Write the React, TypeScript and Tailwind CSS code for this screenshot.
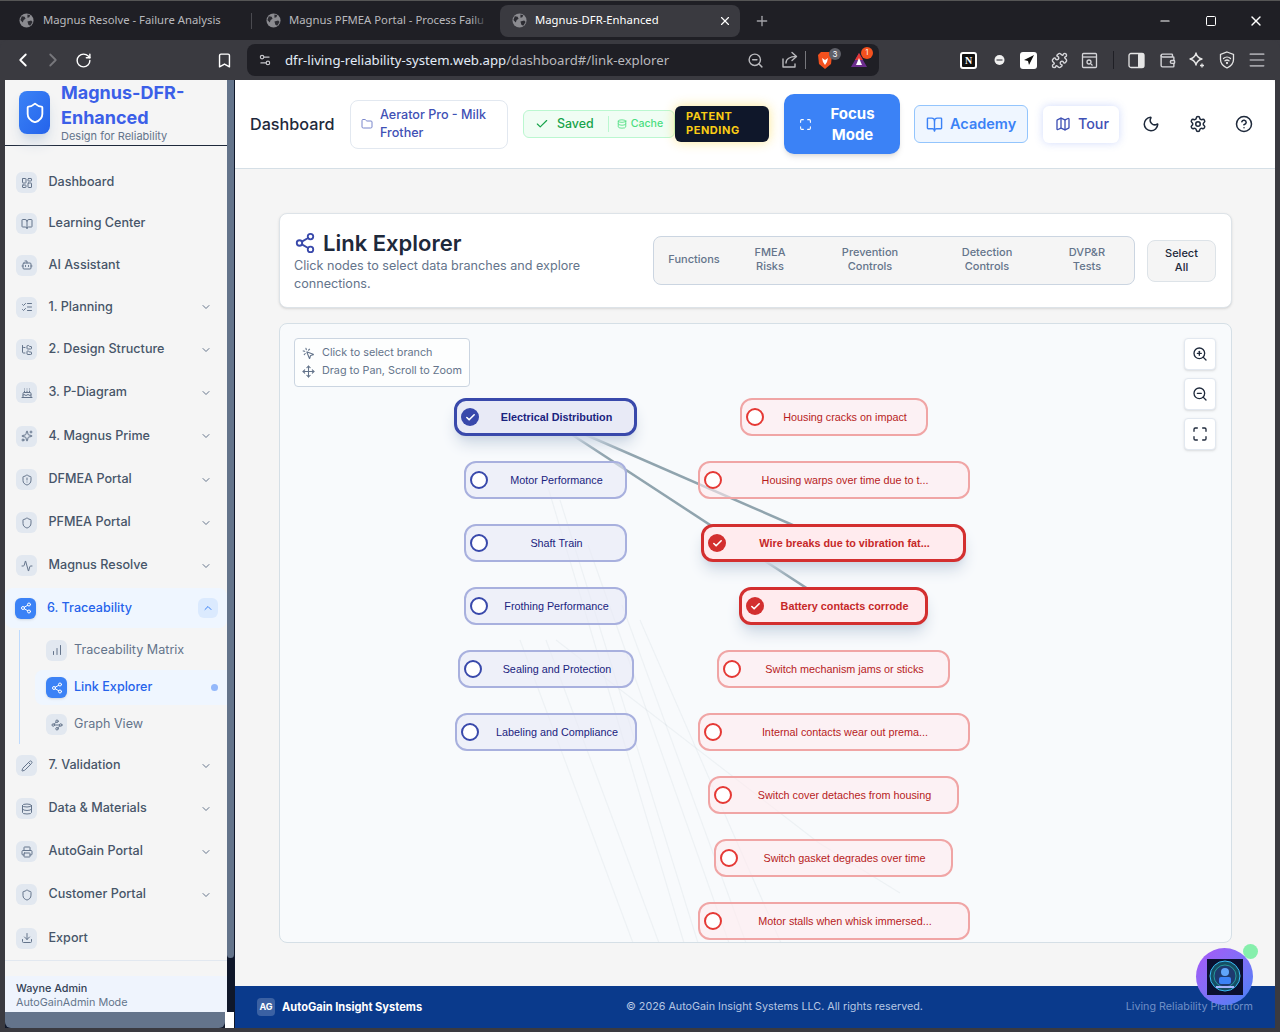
import {
  Activity, Bookmark, BookOpen, Bot, Cake, ChartNoAxesColumnIncreasing, Check, ChevronDown, ChevronLeft,
  ChevronRight, ChevronUp, CircleHelp, Database, Download, Folder, FolderTree, LayoutDashboard, ListChecks,
  Map as MapIcon, Maximize, Menu, Minus, Moon, MousePointerClick, Move, Pencil, Plus, Printer, Puzzle, RotateCw,
  Settings, Settings2, Share2, Shield, ShieldAlert, Sparkles, Square, Wallet, Waypoints, X, ZoomIn, ZoomOut,
} from "lucide-react";

const navTop = [
  { icon: LayoutDashboard, label: "Dashboard", h: "h-[41px]" },
  { icon: BookOpen, label: "Learning Center", h: "h-[41px]" },
  { icon: Bot, label: "AI Assistant", h: "h-[42px]" },
  { icon: ListChecks, label: "1. Planning", h: "h-[42px]", chevron: true },
  { icon: FolderTree, label: "2. Design Structure", h: "h-[43px]", chevron: true },
  { icon: Cake, label: "3. P-Diagram", h: "h-[43px]", chevron: true },
  { icon: Sparkles, label: "4. Magnus Prime", h: "h-[44px]", chevron: true },
  { icon: ShieldAlert, label: "DFMEA Portal", h: "h-[43px]", chevron: true },
  { icon: Shield, label: "PFMEA Portal", h: "h-[43px]", chevron: true },
  { icon: Activity, label: "Magnus Resolve", h: "h-[43px]", chevron: true },
];

const navBottom = [
  { icon: Pencil, label: "7. Validation", h: "h-[43px]", chevron: true },
  { icon: Database, label: "Data & Materials", h: "h-[43px]", chevron: true },
  { icon: Printer, label: "AutoGain Portal", h: "h-[43px]", chevron: true },
  { icon: Shield, label: "Customer Portal", h: "h-[43px]", chevron: true },
  { icon: Download, label: "Export", h: "h-[44px]" },
];

const functionNodes = [
  { label: "Electrical Distribution", pos: "left-[174px] top-[74px] w-[183px]", selected: true },
  { label: "Motor Performance", pos: "left-[184px] top-[137px] w-[163px]" },
  { label: "Shaft Train", pos: "left-[184px] top-[200px] w-[163px]" },
  { label: "Frothing Performance", pos: "left-[184px] top-[263px] w-[163px]" },
  { label: "Sealing and Protection", pos: "left-[178px] top-[326px] w-[176px]" },
  { label: "Labeling and Compliance", pos: "left-[175px] top-[389px] w-[182px]" },
];

const riskNodes = [
  { label: "Housing cracks on impact", pos: "left-[460px] top-[74px] w-[188px]" },
  { label: "Housing warps over time due to t...", pos: "left-[418px] top-[137px] w-[272px]" },
  { label: "Wire breaks due to vibration fat...", pos: "left-[421px] top-[200px] w-[265px]", selected: true },
  { label: "Battery contacts corrode", pos: "left-[459px] top-[263px] w-[189px]", selected: true },
  { label: "Switch mechanism jams or sticks", pos: "left-[437px] top-[326px] w-[233px]" },
  { label: "Internal contacts wear out prema...", pos: "left-[418px] top-[389px] w-[272px]" },
  { label: "Switch cover detaches from housing", pos: "left-[428px] top-[452px] w-[251px]" },
  { label: "Switch gasket degrades over time", pos: "left-[434px] top-[515px] w-[239px]" },
  { label: "Motor stalls when whisk immersed...", pos: "left-[418px] top-[578px] w-[272px]" },
];

// faint links to risks that are scrolled out of view
const faintLines = [
  [520, 640, 633, 943],
  [546, 640, 659, 943],
  [547, 484, 684, 943],
  [560, 500, 698, 943],
  [588, 545, 729, 943],
  [622, 605, 746, 943],
  [640, 620, 781, 943],
  [556, 640, 819, 843],
  [819, 843, 900, 893],
];

function NavRow({ item }: { item: any }) {
  const Icon = item.icon;
  return (
    <div className={`${item.h} flex items-center pl-[11px] pr-[15px]`}>
      <div className="w-[21px] h-[21px] rounded-md bg-[#e2e8f0] flex items-center justify-center text-[#64748b]">
        <Icon size={12} />
      </div>
      <span className="ml-[11.5px] text-[12.6px] font-medium text-[#475569]">{item.label}</span>
      {item.chevron && <ChevronDown size={12} className="ml-auto text-[#64748b]" />}
    </div>
  );
}

function Sidebar() {
  return (
    <div className="w-[230px] flex flex-col shrink-0 bg-[#0f172a]">
      <div className="flex-1 flex min-h-0">
        <div className="w-[222px] bg-[#f5f5f5] flex flex-col overflow-hidden">
          <div className="h-[66px] shrink-0 border-b border-[#1e293b] flex pl-[14px]">
            <div className="mt-[11px] w-[31px] h-[43px] rounded-lg bg-gradient-to-br from-[#3b82f6] to-[#2563eb] flex items-center justify-center shadow-lg shadow-slate-300">
              <Shield size={22} className="text-white" />
            </div>
            <div className="ml-[11px]">
              <div className="text-[18px] leading-[25px] font-bold text-[#3b5fe8]">Magnus-DFR-<br />Enhanced</div>
              <div className="text-[11px] leading-[13px] text-[#64748b]">Design for Reliability</div>
            </div>
          </div>
          <div className="pt-[16px] flex flex-col">
            {navTop.map((item) => (
              <NavRow key={item.label} item={item} />
            ))}
            <div className="h-[40px] mt-[1px] mb-[2px] rounded-lg bg-[#eff6ff] flex items-center pl-[10px] pr-[9px]">
              <div className="w-[21px] h-[21px] rounded-md bg-[#3b82f6] flex items-center justify-center text-white shadow">
                <Share2 size={12} />
              </div>
              <span className="ml-[11px] text-[12.6px] font-medium text-[#2563eb]">6. Traceability</span>
              <div className="ml-auto w-[20px] h-[20px] rounded-md bg-[#dbeafe] flex items-center justify-center text-[#3b82f6]">
                <ChevronUp size={12} />
              </div>
            </div>
            <div className="ml-[14px] border-l border-[#bfdbfe] pl-[15px] h-[114px] flex flex-col">
              <div className="h-[40px] flex items-center pl-[11px]">
                <div className="w-[21px] h-[21px] rounded-md bg-[#e2e8f0] flex items-center justify-center text-[#64748b]">
                  <ChartNoAxesColumnIncreasing size={12} />
                </div>
                <span className="ml-[7px] text-[12.6px] text-[#64748b]">Traceability Matrix</span>
              </div>
              <div className="h-[35px] rounded-l-lg bg-[#eff6ff] flex items-center pl-[11px] pr-[9px]">
                <div className="w-[21px] h-[21px] rounded-md bg-[#3b82f6] flex items-center justify-center text-white shadow">
                  <Share2 size={12} />
                </div>
                <span className="ml-[7px] text-[12.6px] font-medium text-[#2563eb]">Link Explorer</span>
                <span className="ml-auto w-[7px] h-[7px] rounded-full bg-[#93b8fb]" />
              </div>
              <div className="h-[39px] flex items-center pl-[11px]">
                <div className="w-[21px] h-[21px] rounded-md bg-[#e2e8f0] flex items-center justify-center text-[#64748b]">
                  <Waypoints size={12} />
                </div>
                <span className="ml-[7px] text-[12.6px] text-[#64748b]">Graph View</span>
              </div>
            </div>
            {navBottom.map((item) => (
              <NavRow key={item.label} item={item} />
            ))}
          </div>
          <div className="mt-auto border-t border-[#e2e8f0] pt-[15px]">
            <div className="h-[36px] bg-[#eff4fd] pl-[11px] pt-[6px]">
              <div className="text-[10.8px] leading-[14px] font-medium text-[#334155]">Wayne Admin</div>
              <div className="text-[10.8px] leading-[14px] text-[#64748b]">AutoGainAdmin Mode</div>
            </div>
          </div>
        </div>
        <div className="w-[7px] h-[878px] bg-[#64748b] rounded-b" />
      </div>
      <div className="h-[16px] shrink-0 flex">
        <div className="w-[220px] bg-[#64748b] rounded-b-md" />
        <div className="w-[9px] bg-white" />
      </div>
    </div>
  );
}

function Header() {
  return (
    <div className="h-[89px] shrink-0 bg-white border-b border-[#d5dfe6] flex items-center pl-[15px] rounded-tr">
      <span className="pt-[1px] text-[16.2px] font-medium text-[#1e293b] w-[100px]">Dashboard</span>
      <div className="w-[158px] h-[49px] rounded-lg border border-[#e2e8f0] flex items-center pl-[10px]">
        <Folder size={12} className="text-[#7986cb] shrink-0" />
        <span className="ml-[7px] text-[12.6px] leading-[18px] font-medium text-[#3f51b5]">Aerator Pro - Milk<br />Frother</span>
      </div>
      <div className="ml-[15px] w-[152px] h-[28px] rounded-md border border-[#bbf7d0] bg-[#f0fdf4] flex items-center pl-[11px] shrink-0">
        <Check size={14} className="text-[#16a34a]" />
        <span className="ml-[8px] text-[12.4px] font-medium text-[#16a34a]">Saved</span>
        <span className="ml-[14px] w-px h-[16px] bg-[#bbf7d0]" />
        <Database size={10} className="ml-[8px] text-[#4ade80]" />
        <span className="ml-[4px] text-[10.6px] font-medium text-[#4ade80]">Cache</span>
      </div>
      <div className="w-[94px] h-[36px] rounded-md bg-[#0f172a] shadow-[0_0_12px_rgba(250,204,21,0.45)] pl-[11px] pt-[3px] text-[11px] leading-[14px] font-bold tracking-wider text-[#facc15] shrink-0">
        PATENT<br />PENDING
      </div>
      <div className="ml-[15px] w-[116px] h-[60px] rounded-[10px] bg-[#3b82f6] shadow-md flex items-center pl-[15px] text-white shrink-0">
        <Maximize size={13} />
        <span className="flex-1 text-center pr-[7px] text-[15px] leading-[21px] font-bold">Focus<br />Mode</span>
      </div>
      <div className="ml-[14px] w-[114px] h-[38px] rounded-md bg-[#eff6ff] border border-[#93c5fd] flex items-center pl-[11px] text-[#3b82f6] shrink-0">
        <BookOpen size={17} />
        <span className="ml-[7px] text-[14.5px] font-semibold">Academy</span>
      </div>
      <div className="ml-[15px] w-[76px] h-[37px] rounded-md bg-white shadow-[0_0_8px_rgba(99,132,241,0.3)] flex items-center pl-[12px] text-[#3f51b5] shrink-0">
        <MapIcon size={16} />
        <span className="ml-[7px] text-[14.3px] font-medium">Tour</span>
      </div>
      <Moon size={18} className="ml-[23px] text-[#1e293b] shrink-0" />
      <Settings size={18} className="ml-[29px] text-[#1e293b] shrink-0" />
      <CircleHelp size={18} className="ml-[28px] text-[#1e293b] shrink-0" />
    </div>
  );
}

function GraphNode({ node, tone }: { node: any; tone: "blue" | "red" }) {
  const blue = tone === "blue";
  const box = blue
    ? node.selected
      ? "border-[3px] border-[#3949ab] bg-[#e8eaf6] text-[#1a237e] font-bold shadow-lg shadow-slate-300"
      : "border-2 border-[#a8b0de] bg-[#e8eaf6]/60 text-[#1a237e]"
    : node.selected
      ? "border-[3px] border-[#d32f2f] bg-[#ffebee] text-[#c62828] font-bold shadow-lg shadow-slate-300"
      : "border-2 border-[#f0a5a5] bg-[#ffebee]/60 text-[#b71c1c]";
  const dot = blue
    ? node.selected ? "bg-[#3949ab]" : "bg-white border-2 border-[#3949ab]"
    : node.selected ? "bg-[#d32f2f]" : "bg-white border-2 border-[#e53935]";
  return (
    <div
      className={`absolute ${node.pos} h-[38px] rounded-xl flex items-center justify-center pl-[22px] font-['Liberation_Sans',Arial,sans-serif] text-[10.8px] ${box}`}
    >
      <span className={`absolute left-[4px] top-1/2 -translate-y-1/2 w-[18px] h-[18px] rounded-full flex items-center justify-center ${dot}`}>
        {node.selected && <Check size={11} strokeWidth={3.5} className="text-white" />}
      </span>
      {node.label}
    </div>
  );
}

function Canvas() {
  return (
    <div className="relative h-[620px] rounded-lg border border-[#d5dfe6] bg-[#f8fafc] overflow-hidden">
      <svg className="absolute inset-0 w-full h-full">
        <g transform="translate(-280 -324)">
          {faintLines.map((l, i) => (
            <line key={i} x1={l[0]} y1={l[1]} x2={l[2]} y2={l[3]} stroke="#90a4ae" strokeOpacity={0.1} strokeWidth={1.2} />
          ))}
          <line x1={545} y1={417} x2={834} y2={543} stroke="#90a4ae" strokeWidth={2.5} />
          <line x1={545} y1={417} x2={834} y2={606} stroke="#90a4ae" strokeWidth={2.5} />
        </g>
      </svg>
      <div className="absolute left-[14px] top-[14px] w-[176px] h-[49px] rounded border border-[#cbd5e1] bg-white/70 pl-[7px] pt-[5px] text-[10.8px] leading-[18px] text-[#64748b]">
        <div className="flex items-center gap-[7px]">
          <MousePointerClick size={13} />
          <span>Click to select branch</span>
        </div>
        <div className="flex items-center gap-[7px]">
          <Move size={13} />
          <span>Drag to Pan, Scroll to Zoom</span>
        </div>
      </div>
      <div className="absolute right-[15px] top-[14px] flex flex-col gap-[8px] text-[#1e293b]">
        <div className="w-[32px] h-[32px] rounded bg-white border border-[#e2e8f0] shadow-sm flex items-center justify-center">
          <ZoomIn size={16} />
        </div>
        <div className="w-[32px] h-[32px] rounded bg-white border border-[#e2e8f0] shadow-sm flex items-center justify-center">
          <ZoomOut size={16} />
        </div>
        <div className="w-[32px] h-[32px] rounded bg-white border border-[#e2e8f0] shadow-sm flex items-center justify-center">
          <Maximize size={16} />
        </div>
      </div>
      {functionNodes.map((n) => (
        <GraphNode key={n.label} node={n} tone="blue" />
      ))}
      {riskNodes.map((n) => (
        <GraphNode key={n.label} node={n} tone="red" />
      ))}
    </div>
  );
}

function Main() {
  return (
    <div className="flex-1 min-w-0 flex flex-col bg-[#f5f5f5] relative">
      <Header />
      <div className="flex-1 pl-[44px] pr-[43px] pt-[44px] flex flex-col gap-[15px]">
        <div className="h-[95px] rounded-lg border border-[#dde3e8] bg-white shadow-sm flex pl-[14px] pr-[15px]">
          <div className="w-[300px] pt-[15px]">
            <div className="flex items-center">
              <Share2 size={22} className="text-[#3949ab]" />
              <span className="ml-[7px] text-[22px] leading-[28px] font-semibold text-[#1e293b]">Link Explorer</span>
            </div>
            <p className="text-[12.6px] leading-[18px] text-[#64748b]">Click nodes to select data branches and explore connections.</p>
          </div>
          <div className="ml-auto flex items-center">
            <div className="h-[49px] pb-[3px] rounded-lg border border-[#cbd5e1] bg-[#f5f5f5] flex items-center text-[11px] leading-[14px] font-medium text-[#64748b] text-center">
              <span className="w-[80px]">Functions</span>
              <span className="w-[72px]">FMEA<br />Risks</span>
              <span className="w-[128px]">Prevention<br />Controls</span>
              <span className="w-[106px]">Detection<br />Controls</span>
              <span className="w-[94px]">DVP&amp;R<br />Tests</span>
            </div>
            <div className="ml-[12px] w-[69px] h-[42px] pb-[2px] rounded-lg border border-[#dde3e8] bg-[#f5f5f5] flex items-center justify-center text-center text-[11px] leading-[14px] font-medium text-[#1e293b]">
              Select<br />All
            </div>
          </div>
        </div>
        <Canvas />
      </div>
      <div className="h-[42px] shrink-0 bg-[#0a3a8c] flex items-center pl-[22px] pr-[22px] text-[10.75px]">
        <div className="w-[18px] h-[18px] rounded bg-white/20 flex items-center justify-center text-[9px] font-bold text-white">AG</div>
        <span className="ml-[7px] text-[11.1px] font-bold text-white w-[344px]">AutoGain Insight Systems</span>
        <span className="text-[#b6c6e3]">© 2026 AutoGain Insight Systems LLC. All rights reserved.</span>
        <span className="ml-auto text-[#6f8fc7]">Living Reliability Platform</span>
      </div>
      <div className="absolute left-[961px] top-[868px] w-[57px] h-[57px] rounded-full bg-gradient-to-br from-[#a855f7] to-[#3b82f6] flex items-center justify-center">
        <svg width="36" height="36" viewBox="0 0 36 36">
          <rect width="36" height="36" fill="#0b1030" />
          <circle cx="18" cy="17" r="15" fill="#164e63" stroke="#38bdf8" strokeWidth="1" />
          <circle cx="18" cy="17" r="11" fill="#1e3a6e" stroke="#2dd4bf" strokeWidth="0.6" />
          <circle cx="18" cy="13" r="4" fill="#60a5fa" />
          <rect x="12" y="18" width="12" height="7" rx="2" fill="#3b82f6" />
          <rect x="9" y="27" width="18" height="2" fill="#a5b4fc" />
        </svg>
      </div>
      <span className="absolute left-[1008px] top-[864px] w-[15px] h-[15px] rounded-full bg-[#86efac]" />
    </div>
  );
}

function TabGlobe() {
  return (
    <svg width="15" height="15" viewBox="0 0 16 16" className="shrink-0">
      <circle cx="8" cy="8" r="7.500" fill="#8b8b90" />
      <path d="M3 3.500l3 .5 1 2-2 1.500-1 2.500-2.500-2.500ZM9 1.500l3 1-1 2-2 .5ZM9 9l4-1 1.500 1.500-2.500 4-2-1Z" fill="#2c2c32" />
    </svg>
  );
}

function BrowserChrome() {
  return (
    <>
      <div className="h-[40px] shrink-0 bg-[#1f1f25] border-t border-[#555] flex items-center pl-[7px] text-white font-['Noto_Sans',sans-serif] text-[11.3px]">
        <div className="w-[244px] h-[32px] flex items-center pl-[12px] text-[#b9b9bd]">
          <TabGlobe />
          <span className="ml-[9px] whitespace-nowrap">Magnus Resolve - Failure Analysis</span>
        </div>
        <div className="w-px h-[16px] bg-[#4a4a50] mr-[2px]" />
        <div className="relative w-[246px] h-[32px] flex items-center pl-[12px] text-[#b9b9bd]">
          <TabGlobe />
          <span className="ml-[8px] whitespace-nowrap">Magnus PFMEA Portal - Process Failu</span>
          <span className="absolute left-[218px] w-[16px] h-[20px] bg-gradient-to-r from-transparent to-[#1f1f25]" />
        </div>
        <div className="relative w-[240px] h-[32px] rounded-lg bg-[#3a3a40] flex items-center pl-[12px] text-white">
          <TabGlobe />
          <span className="ml-[8px] whitespace-nowrap">Magnus-DFR-Enhanced</span>
          <X size={14} className="absolute right-[8px]" />
        </div>
        <Plus size={16} className="ml-[14px] text-[#a3a3a8]" />
        <Minus size={14} className="ml-auto text-white" />
        <Square size={12} className="ml-[33px] text-white" />
        <X size={16} className="ml-[31px] mr-[16px] text-white" />
      </div>
      <div className="h-[40px] shrink-0 bg-[#3a3a40] rounded-t-lg flex items-center text-[#d4d4d8]">
        <ChevronLeft size={22} className="ml-[12px] text-white" />
        <ChevronRight size={22} className="ml-[8px] text-[#77777c]" />
        <RotateCw size={17} className="ml-[11px] text-white" />
        <Bookmark size={17} className="ml-[124px] text-white" />
        <div className="ml-[14px] w-[632px] h-[32px] rounded-lg bg-[#1f1f25] flex items-center pl-[11px]">
          <Settings2 size={14} className="text-[#c5c5ca]" />
          <span className="ml-[13px] pt-[1px] text-[13.2px] font-['Noto_Sans',sans-serif] text-[#e3ecf7]">
            dfr-living-reliability-system.web.app<span className="text-[#b9b9bd]">/dashboard#/link-explorer</span>
          </span>
          <ZoomOut size={17} className="ml-auto text-[#b9b9bd]" />
          <svg width="18" height="18" viewBox="0 0 18 18" fill="none" stroke="#b9b9bd" strokeWidth="1.4" strokeLinecap="round" strokeLinejoin="round" className="ml-[17px]">
            <path d="M2 8v8h12v-3" />
            <path d="M5 12c0-4 4-6.500 10-6.500" />
            <path d="M11 1.500l4.500 4-4.500 4" />
          </svg>
          <span className="ml-[6px] w-px h-[18px] bg-[#77777c]" />
          <span className="relative ml-[11px]">
            <svg width="16" height="19" viewBox="0 0 16 19">
              <path d="M4 1h8l3 3-1 9-6 5-6-5-1-9Z" fill="#f4511e" />
              <path d="M5 7l3 2 3-2-1 4-2 3-2-3Z" fill="#fff" />
            </svg>
            <span className="absolute -top-[3px] -right-[8px] w-[12px] h-[12px] rounded-full bg-[#5f6068] text-[8px] leading-[12px] text-center text-white">3</span>
          </span>
          <span className="relative ml-[17px] mr-[11px]">
            <svg width="18" height="16" viewBox="0 0 18 16">
              <path d="M9 1L17 15H1Z" fill="#6b2d8c" />
              <path d="M9 1L13 8H5Z" fill="#e53935" />
              <path d="M9 6L12 13H6Z" fill="#fff" />
            </svg>
            <span className="absolute -top-[5px] -right-[5px] w-[12px] h-[12px] rounded-full bg-[#f4511e] text-[7px] leading-[12px] text-center text-white">1</span>
          </span>
        </div>
        <div className="ml-[81px] w-[17px] h-[17px] rounded-[3px] border-2 border-white bg-[#111] text-[10px] leading-[13px] text-center font-bold text-white font-['Liberation_Serif',serif]">N</div>
        <svg width="11" height="11" viewBox="0 0 11 11" className="ml-[17px]">
          <circle cx="5.500" cy="5" r="5" fill="#f0f0f0" />
          <rect x="2.500" y="4" width="6" height="2" fill="#8b8b90" />
        </svg>
        <div className="ml-[15px] w-[17px] h-[17px] rounded-[3px] bg-white flex items-center justify-center">
          <svg width="12" height="12" viewBox="0 0 12 12"><path d="M11 1L1 6l4 1 1 4Z" fill="#111" /></svg>
        </div>
        <Puzzle size={17} className="ml-[14px]" />
        <svg width="17" height="17" viewBox="0 0 17 17" fill="none" stroke="#d4d4d8" strokeWidth="1.3" className="ml-[13px]">
          <rect x="1.500" y="1.500" width="14" height="14" rx="1" />
          <path d="M1.500 5h14" />
          <circle cx="8" cy="10" r="2" />
          <path d="M10 12l1.500 1.500" />
        </svg>
        <span className="ml-[15px] w-px h-[18px] bg-[#1f1f25]" />
        <svg width="17" height="17" viewBox="0 0 17 17" className="ml-[14px]">
          <rect x="1" y="1.500" width="15" height="14" rx="2" fill="none" stroke="#e5e5e5" strokeWidth="1.3" />
          <rect x="10" y="1.500" width="6" height="14" rx="1" fill="#e5e5e5" />
        </svg>
        <Wallet size={17} className="ml-[14px]" />
        <svg width="18" height="18" viewBox="0 0 18 18" fill="none" stroke="#e5e5e5" strokeWidth="1.3" strokeLinejoin="round" className="ml-[12px]">
          <path d="M8 2c.8 3.500 2.500 5.200 6 6-3.500.8-5.200 2.500-6 6-.8-3.500-2.500-5.200-6-6 3.500-.8 5.200-2.500 6-6Z" />
          <path d="M14 12.500v4M12 14.500h4" />
        </svg>
        <svg width="16" height="18" viewBox="0 0 16 18" fill="none" stroke="#e5e5e5" strokeWidth="1.3" strokeLinecap="round" className="ml-[13px]">
          <path d="M8 1l6.500 2.500v5c0 4-3 6.800-6.500 8.500-3.500-1.700-6.500-4.500-6.500-8.500v-5Z" />
          <path d="M4.500 7.500c2-1.800 5-1.800 7 0M6 9.800c1.200-1 2.800-1 4 0" />
          <circle cx="8" cy="12" r=".5" />
        </svg>
        <Menu size={20} className="ml-[12px] text-[#a3a3a8]" />
      </div>
    </>
  );
}

export default function App() {
  return (
    <div className="w-[1280px] h-[1032px] overflow-hidden bg-[#3a3a40] flex flex-col font-['Inter',sans-serif]">
      <BrowserChrome />
      <div className="flex-1 min-h-0 flex pl-[5px] pr-[5px] pb-[4px]">
        <Sidebar />
        <Main />
      </div>
    </div>
  );
}
